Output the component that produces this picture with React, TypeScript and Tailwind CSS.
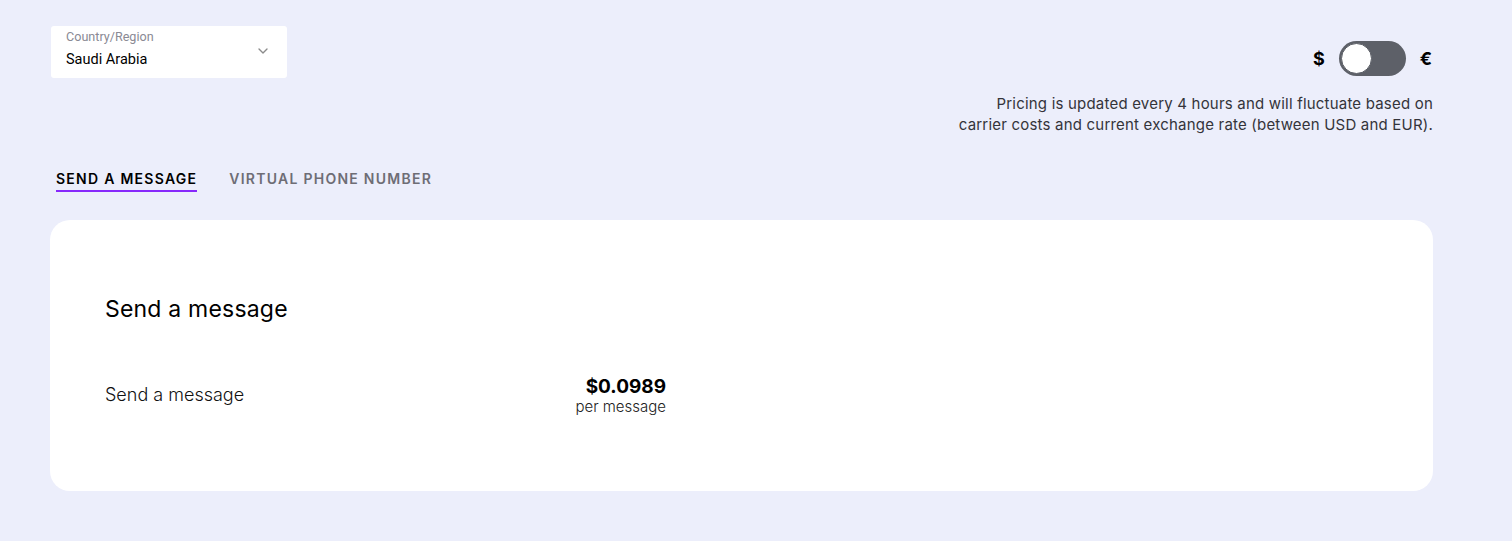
import { ChevronDown } from "lucide-react";

const sans = { fontFamily: "Inter, 'Liberation Sans', sans-serif" };

export default function App() {
  return (
    <div className="min-h-[541px] bg-[#eceefb] text-black" style={sans}>
      <div className="ml-[50px] w-[1383px] pt-[26px]">
        {/* top bar: country picker + currency */}
        <div className="flex items-start justify-between">
          <div className="relative ml-px h-[52px] w-[236px] rounded-[3px] bg-white px-[15px] pt-[3px]">
            <div className="text-[12.6px] leading-[16px] text-[#8a8a94]" style={{ fontFamily: "Roboto, sans-serif" }}>
              Country/Region
            </div>
            <div className="mt-[6px] text-[14.5px] leading-[18px] text-black" style={{ fontFamily: "Roboto, sans-serif" }}>
              Saudi Arabia
            </div>
            <ChevronDown className="absolute right-[16px] top-[17px] h-[16px] w-[16px] text-[#8b8b8b]" strokeWidth={2} />
          </div>

          <div className="flex flex-col items-end">
            <div className="mt-[15px] flex items-center">
              <span className="text-[18px] font-bold leading-none">$</span>
              <div className="ml-[14px] flex h-[35px] w-[67px] items-center rounded-full bg-[#5d6068] px-[2px]">
                <div className="h-[31px] w-[31px] rounded-full border border-[#5d6068] bg-white" />
              </div>
              <span className="ml-[14px] mr-[1px] text-[18px] font-bold leading-none">€</span>
            </div>
            <p className="mt-[17px] text-right text-[15px] leading-[21px] tracking-[0.2px] text-[#34343a]">
              Pricing is updated every 4 hours and will fluctuate based on
              <br />
              carrier costs and current exchange rate (between USD and EUR).
            </p>
          </div>
        </div>

        {/* tabs */}
        <div className="mt-[35px] flex gap-[32px] pl-[6px]">
          <div className="border-b-2 border-[#8728fb] pb-[2px] text-[14px] font-semibold leading-[18px] tracking-[0.09em] text-black">
            SEND A MESSAGE
          </div>
          <div className="text-[14px] font-semibold leading-[18px] tracking-[0.09em] text-[#6e6d75]">
            VIRTUAL PHONE NUMBER
          </div>
        </div>

        {/* card */}
        <div className="mt-[28px] h-[271px] rounded-[20px] bg-white px-[55px] pt-[75px]">
          <h2 className="text-[23px] leading-[28px] tracking-[0.2px] text-black">Send a message</h2>
          <div className="mt-[53px] flex w-[561px] items-start justify-between">
            <span className="mt-[7px] text-[18px] font-light leading-[24px] text-[#111]">Send a message</span>
            <div className="flex flex-col items-end">
              <span className="text-[19px] font-bold leading-[22px]">$0.0989</span>
              <span className="text-[15px] font-light leading-[18px] text-[#222]">per message</span>
            </div>
          </div>
        </div>
      </div>
    </div>
  );
}
